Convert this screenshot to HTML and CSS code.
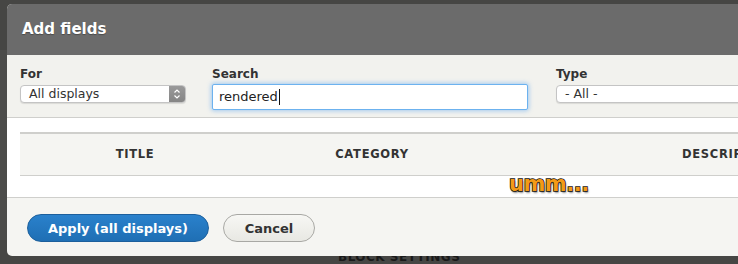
FILE: index.html
```html
<!DOCTYPE html>
<html lang="en">
<head>
    <meta charset="UTF-8">
    <title>Add fields</title>
    <link rel="stylesheet" href="styles.css">
</head>
<body>
    <div class="page">
        <div class="page-side"></div>
        <div class="page-bottom">BLOCK SETTINGS</div>
    </div>

    <div class="dialog">
        <div class="dialog-title">Add fields</div>

        <div class="filters">
            <div class="filter-group filter-for">
                <label>For</label>
                <div class="select">
                    <span>All displays</span>
                    <span class="stepper">
                        <svg width="8" height="12" viewBox="0 0 8 12"><path d="M1.5 4.5 L4 2 L6.5 4.5 M1.5 7.5 L4 10 L6.5 7.5" fill="none" stroke="#fff" stroke-width="1.2"/></svg>
                    </span>
                </div>
            </div>
            <div class="filter-group filter-search">
                <label>Search</label>
                <div class="input">rendered<span class="caret"></span></div>
            </div>
            <div class="filter-group filter-type">
                <label>Type</label>
                <div class="select select-wide"><span>- All -</span></div>
            </div>
        </div>

        <div class="results">
            <table>
                <thead>
                    <tr>
                        <th class="col-title">Title</th>
                        <th class="col-category">Category</th>
                        <th class="col-desc">Description</th>
                    </tr>
                </thead>
                <tbody>
                    <tr><td colspan="3"><span class="umm">umm...</span></td></tr>
                </tbody>
            </table>
        </div>

        <div class="dialog-buttons">
            <button class="btn btn-primary">Apply (all displays)</button>
            <button class="btn btn-secondary">Cancel</button>
        </div>
    </div>
</body>
</html>
```

FILE: styles.css
```css
* {
    margin: 0;
    padding: 0;
    box-sizing: border-box;
    font-family: "DejaVu Sans", Verdana, sans-serif;
}

body {
    background: #464644;
    width: 738px;
    height: 264px;
    overflow: hidden;
    position: relative;
}

.page-side {
    position: absolute;
    left: 0;
    top: 50px;
    width: 7px;
    height: 190px;
    background: #4c4c4a;
}

.page-bottom {
    position: absolute;
    left: 338px;
    top: 250px;
    font-size: 12px;
    font-weight: bold;
    letter-spacing: 0.5px;
    color: #1a1a1a;
}

.dialog {
    position: absolute;
    left: 7px;
    top: 4px;
    width: 760px;
    height: 252px;
    background: #f5f5f2;
    border-radius: 5px 0 0 5px;
    overflow: hidden;
    display: flex;
    flex-direction: column;
}

.dialog-title {
    height: 51px;
    background: #6b6b6b;
    color: #fff;
    font-size: 15px;
    font-weight: bold;
    padding: 16px 0 0 15px;
    text-shadow: 0 1px 1px rgba(0,0,0,0.3);
}

.filters {
    height: 63px;
    background: #f2f2ee;
    border-bottom: 1px solid #cfcfcc;
    display: flex;
    padding: 12px 0 0 13px;
}

.filter-group {
    display: flex;
    flex-direction: column;
}

.filter-group label {
    font-size: 12px;
    font-weight: bold;
    color: #333;
    margin-bottom: 4px;
}

.filter-for {
    width: 192px;
}

.filter-search {
    width: 344px;
}

.select {
    width: 166px;
    height: 18px;
    background: #fff;
    border: 1px solid #c4c4c4;
    border-radius: 4px;
    font-size: 12.5px;
    color: #333;
    padding: 0 0 0 8px;
    display: flex;
    justify-content: space-between;
    box-shadow: 0 1px 1px rgba(0,0,0,0.1);
    position: relative;
}

.select-wide {
    width: 200px;
}

.stepper {
    width: 16px;
    height: 16px;
    background: linear-gradient(#9a9a9a, #858585);
    border-radius: 0 3px 3px 0;
    display: flex;
    align-items: center;
    justify-content: center;
}

.filter-search label {
    margin-bottom: 3px;
}

.input {
    width: 316px;
    height: 26px;
    background: #fff;
    border: 1px solid #6cb2ef;
    border-radius: 2px;
    box-shadow: 0 0 4px 1px rgba(100,170,240,0.55);
    font-size: 13px;
    color: #222;
    padding: 4px 0 0 6px;
    display: flex;
    align-items: flex-start;
}

.caret {
    width: 1px;
    height: 16px;
    background: #111;
    margin-left: 1px;
}

.results {
    background: #fff;
    height: 80px;
    border-bottom: 1px solid #cfcfcc;
    padding: 14px 0 0 13px;
}

table {
    width: 760px;
    border-collapse: collapse;
}

th {
    height: 42px;
    background: #f5f5f2;
    border-top: 2px solid #cfcfcc;
    border-bottom: 1px solid #cfcfcc;
    font-size: 11.5px;
    font-weight: bold;
    letter-spacing: 0.7px;
    color: #333;
    text-transform: uppercase;
    text-align: center;
}

.col-title {
    width: 230px;
}

.col-category {
    width: 244px;
}

.col-desc {
    text-align: left;
    padding-left: 188px;
}

td {
    height: 24px;
    position: relative;
}

.umm {
    position: absolute;
    left: 489px;
    top: -4px;
    font-family: "DejaVu Sans", sans-serif;
    font-weight: bold;
    font-size: 21px;
    letter-spacing: -0.5px;
    color: #f39a17;
    -webkit-text-stroke: 1.5px #111;
    paint-order: stroke fill;
    text-shadow: 1px 2px 2px rgba(0,0,0,0.45);
}

.dialog-buttons {
    display: flex;
    gap: 14px;
    padding: 16px 0 0 20px;
}

.btn {
    height: 28px;
    border-radius: 14px;
    font-size: 13px;
    font-weight: bold;
    cursor: pointer;
}

.btn-primary {
    width: 182px;
    background: linear-gradient(#2a81cc, #1f6fb4);
    border: 1px solid #1c5f9c;
    color: #fff;
}

.btn-secondary {
    width: 92px;
    background: linear-gradient(#f7f7f4, #e8e8e3);
    border: 1px solid #a8a8a4;
    color: #333;
}
```
